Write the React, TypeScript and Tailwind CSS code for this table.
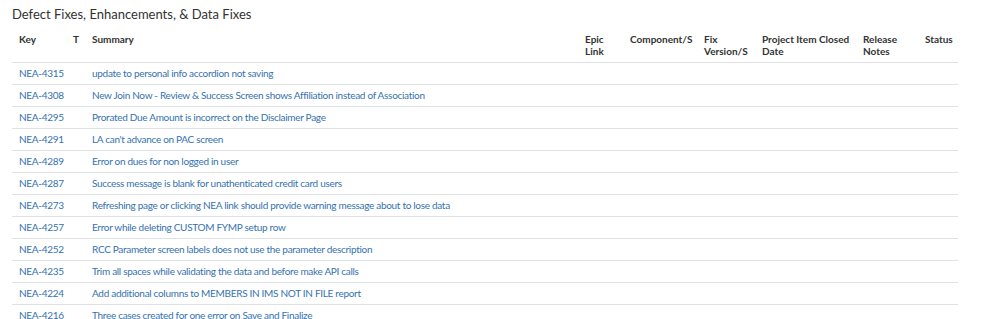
const rows: [string, string][] = [
  ['NEA-4315', 'update to personal info accordion not saving'],
  ['NEA-4308', 'New Join Now - Review & Success Screen shows Affiliation instead of Association'],
  ['NEA-4295', 'Prorated Due Amount is incorrect on the Disclaimer Page'],
  ['NEA-4291', "LA can't advance on PAC screen"],
  ['NEA-4289', 'Error on dues for non logged in user'],
  ['NEA-4287', 'Success message is blank for unathenticated credit card users'],
  ['NEA-4273', 'Refreshing page or clicking NEA link should provide warning message about to lose data'],
  ['NEA-4257', 'Error while deleting CUSTOM FYMP setup row'],
  ['NEA-4252', 'RCC Parameter screen labels does not use the parameter description'],
  ['NEA-4235', 'Trim all spaces while validating the data and before make API calls'],
  ['NEA-4224', 'Add additional columns to MEMBERS IN IMS NOT IN FILE report'],
  ['NEA-4216', 'Three cases created for one error on Save and Finalize'],
];

const headers = [
  { label: 'Key', w: 'w-[54px]' },
  { label: 'T', w: 'w-[19px]' },
  { label: 'Summary', w: 'w-[493px]' },
  { label: 'Epic Link', w: 'w-[45px]' },
  { label: 'Component/S', w: 'w-[74px]' },
  { label: 'Fix Version/S', w: 'w-[58px]' },
  { label: 'Project Item Closed Date', w: 'w-[101px]' },
  { label: 'Release Notes', w: 'w-[62px]' },
  { label: 'Status', w: 'w-[40px]' },
];

export default function App() {
  return (
    <div className="w-[998px] h-[319px] overflow-hidden bg-white pl-3 pt-[5px] font-['Segoe_UI','Lato','Noto_Sans',sans-serif] text-[#333]">
      <h2 className="text-[13px] leading-[18px] text-[#333] mb-[6px]">Defect Fixes, Enhancements, &amp; Data Fixes</h2>
      <table className="table-fixed border-collapse w-[946px] text-[10px] tracking-[-0.3px]">
        <colgroup>
          {headers.map((h) => (
            <col key={h.label} className={h.w} />
          ))}
        </colgroup>
        <thead>
          <tr className="border-b border-[#dfe1e5]">
            {headers.map((h) => (
              <th
                key={h.label}
                className="text-left align-top font-bold text-[#333] pl-[7px] pr-[2px] pt-[4px] pb-[5px] leading-[12px] tracking-normal"
              >
                {h.label}
              </th>
            ))}
          </tr>
        </thead>
        <tbody>
          {rows.map(([key, summary]) => (
            <tr key={key} className="border-b border-[#dfe1e5] h-[22px]">
              <td className="px-[7px] text-[#3572b0] whitespace-nowrap">{key}</td>
              <td className="px-[7px]"></td>
              <td className="px-[7px] text-[#3572b0] whitespace-nowrap">{summary}</td>
              <td></td>
              <td></td>
              <td></td>
              <td></td>
              <td></td>
              <td></td>
            </tr>
          ))}
        </tbody>
      </table>
    </div>
  );
}
